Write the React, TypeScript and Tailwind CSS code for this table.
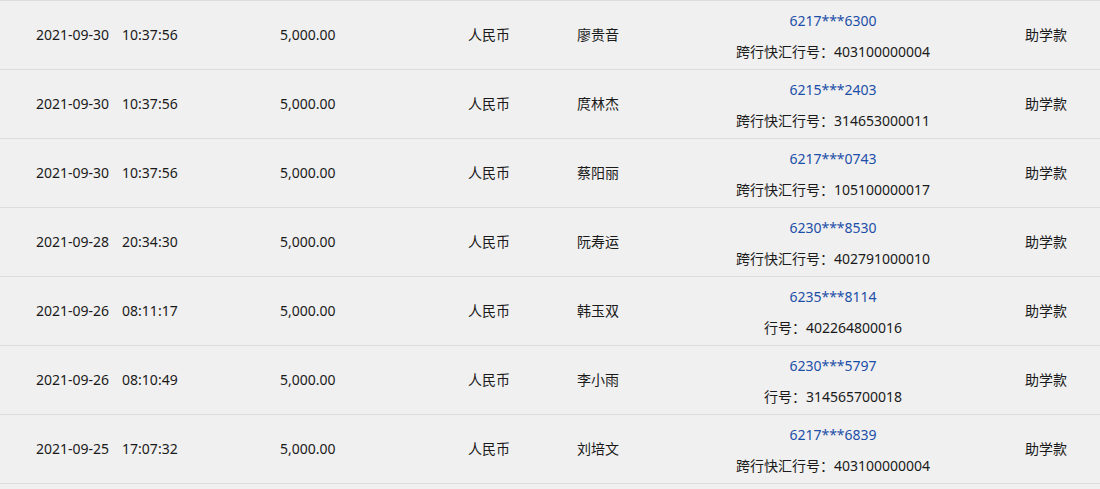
const rows = [
  { date: "2021-09-30", time: "10:37:56", name: "廖贵音", card: "6217***6300", bank: "跨行快汇行号：403100000004" },
  { date: "2021-09-30", time: "10:37:56", name: "庹林杰", card: "6215***2403", bank: "跨行快汇行号：314653000011" },
  { date: "2021-09-30", time: "10:37:56", name: "蔡阳丽", card: "6217***0743", bank: "跨行快汇行号：105100000017" },
  { date: "2021-09-28", time: "20:34:30", name: "阮寿运", card: "6230***8530", bank: "跨行快汇行号：402791000010" },
  { date: "2021-09-26", time: "08:11:17", name: "韩玉双", card: "6235***8114", bank: "行号：402264800016" },
  { date: "2021-09-26", time: "08:10:49", name: "李小雨", card: "6230***5797", bank: "行号：314565700018" },
  { date: "2021-09-25", time: "17:07:32", name: "刘培文", card: "6217***6839", bank: "跨行快汇行号：403100000004" },
];

export default function App() {
  return (
    <div
      className="w-[1100px] h-[489px] overflow-hidden bg-[#f0f0f0] text-[14px] text-[#1a1a1a] border-t border-[#dcdcdc]"
      style={{ fontFamily: '"Noto Sans", "Noto Sans CJK SC", sans-serif' }}
    >
      {rows.map((r, i) => (
        <div key={i} className="grid grid-cols-[280px_188px_109px_73px_366px_1fr] items-center h-[69px] pb-[2px] border-b border-[#dcdcdc]">
          <div className="pl-[36px] flex gap-[13px]">
            <span>{r.date}</span>
            <span>{r.time}</span>
          </div>
          <div>5,000.00</div>
          <div>人民币</div>
          <div>{r.name}</div>
          <div className="mt-[4px] flex flex-col items-center gap-[10px]">
            <span className="text-[#1c4fa8]">{r.card}</span>
            <span>{r.bank}</span>
          </div>
          <div className="pl-[9px]">助学款</div>
        </div>
      ))}
    </div>
  );
}
